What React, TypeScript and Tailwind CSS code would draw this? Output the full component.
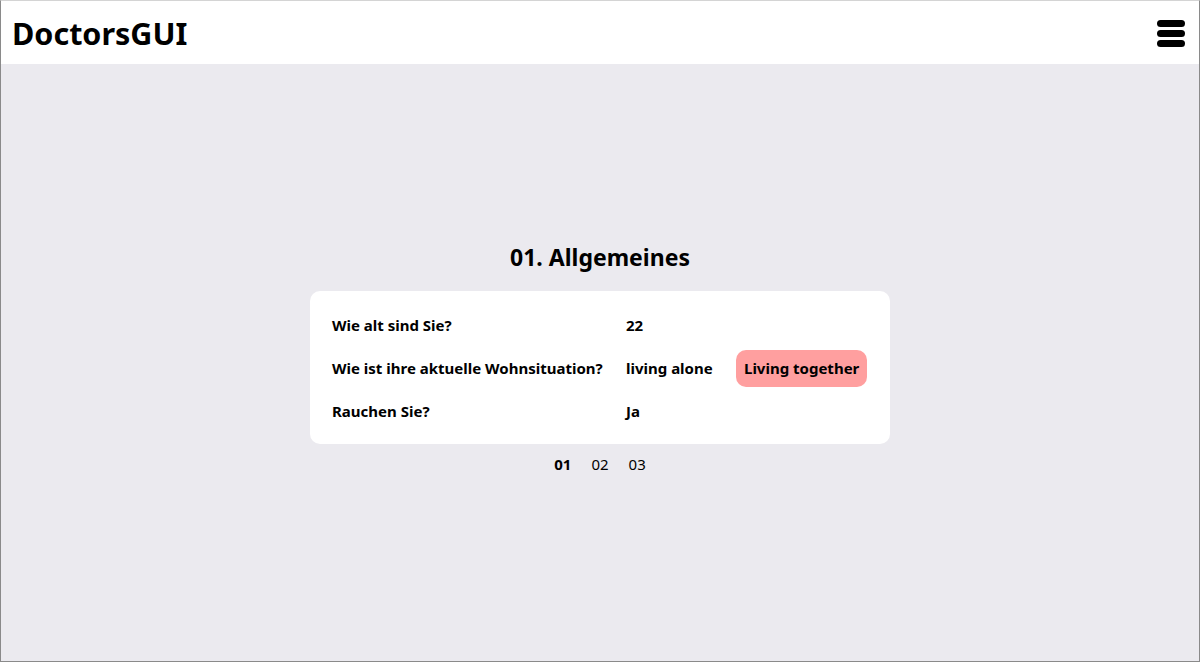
import React from "react";

const rows = [
  { q: "Wie alt sind Sie?", a: "22" },
  { q: "Wie ist ihre aktuelle Wohnsituation?", a: "living alone", b: "Living together" },
  { q: "Rauchen Sie?", a: "Ja" },
];

function MenuIcon() {
  return (
    <svg width="28" height="28" viewBox="0 0 28 28" aria-hidden>
      <rect x="0" y="0" width="28" height="7" rx="3.5" fill="#000" />
      <rect x="0" y="10" width="28" height="7" rx="3.5" fill="#000" />
      <rect x="0" y="20" width="28" height="7" rx="3.5" fill="#000" />
    </svg>
  );
}

export default function App() {
  return (
    <div
      className="h-[662px] w-full flex flex-col border border-[#8a8a8a] border-t-[#d4d4d4] bg-[#ebeaef] text-black"
      style={{ fontFamily: '"Noto Sans", "Open Sans", sans-serif' }}
    >
      <header className="h-[63px] bg-white flex items-center justify-between pl-[11px] pr-[14px]">
        <h1 className="text-[30.5px] font-bold leading-none pt-[2px]">DoctorsGUI</h1>
        <button className="pt-[3px]">
          <MenuIcon />
        </button>
      </header>
      <main className="flex-1 flex flex-col items-center justify-center pb-[4px]">
        <h2 className="text-[23px] font-bold leading-none mb-[22px]">01. Allgemeines</h2>
        <div className="w-[580px] bg-white rounded-[10px] px-[22px] pt-[16px] pb-[14px]">
          <div className="grid grid-cols-[294px_110px_auto] items-center gap-y-[6px]">
            {rows.map((r) => (
              <React.Fragment key={r.q}>
                <div className="text-[15px] font-bold h-[37px] flex items-center">{r.q}</div>
                <div className="text-[15px] font-bold h-[37px] flex items-center">{r.a}</div>
                <div className="h-[37px] flex items-center">
                  {r.b && (
                    <span className="h-[37px] px-[8px] rounded-[10px] bg-[#ff9f9f] text-[15px] font-bold flex items-center">
                      {r.b}
                    </span>
                  )}
                </div>
              </React.Fragment>
            ))}
          </div>
        </div>
        <nav className="flex gap-[20px] mt-[9px] text-[15px]">
          <span className="font-bold">01</span>
          <span>02</span>
          <span>03</span>
        </nav>
      </main>
    </div>
  );
}
